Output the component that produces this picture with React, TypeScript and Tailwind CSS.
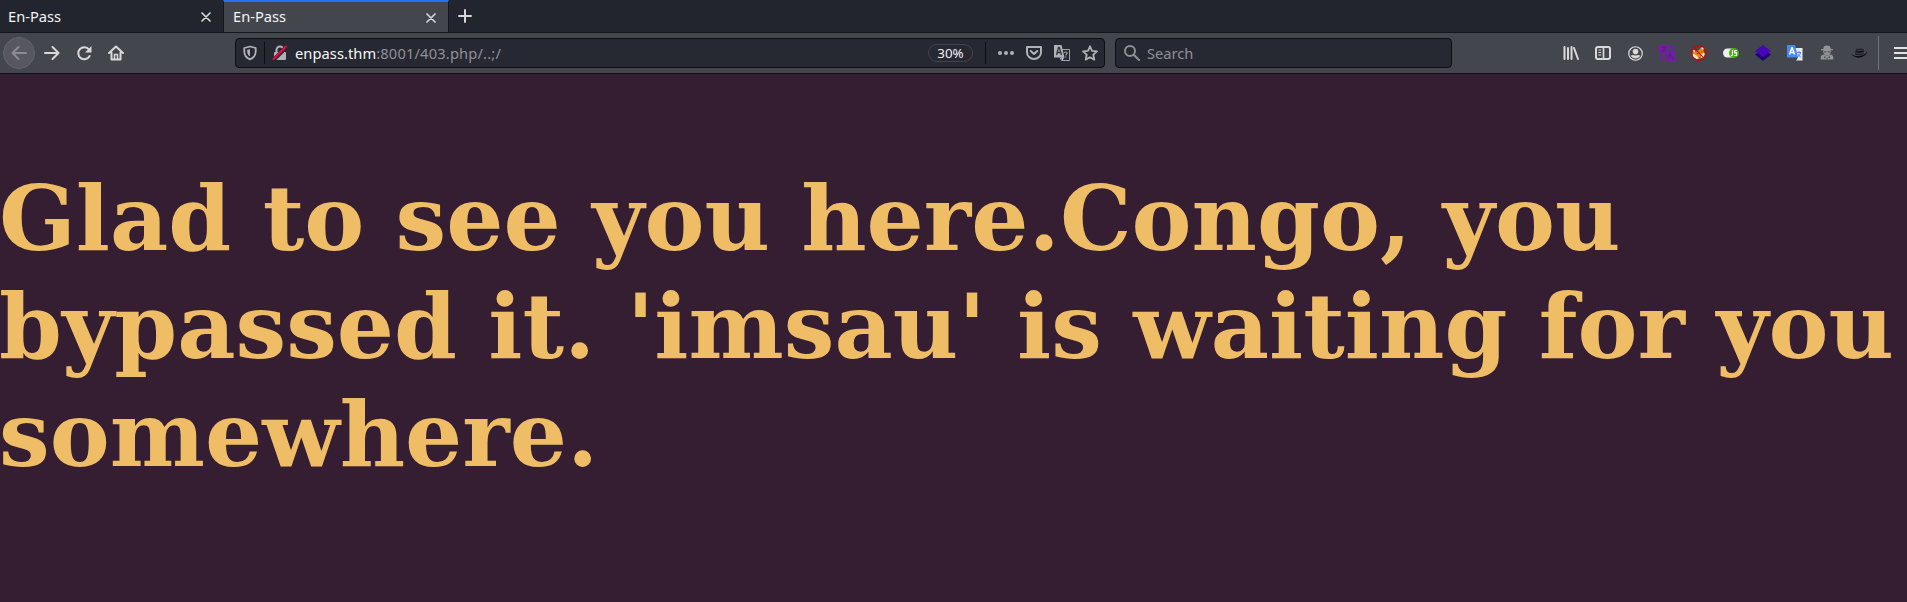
import React from "react";

const CloseIcon = () => (
  <svg width="10" height="10" viewBox="0 0 10 10" fill="none" stroke="#d6d6d6" strokeWidth="1.7" strokeLinecap="round">
    <path d="M1 1 9 9M9 1 1 9" />
  </svg>
);

const Cell = ({ children }: { children: React.ReactNode }) => (
  <div className="flex h-8 w-8 shrink-0 items-center justify-center">{children}</div>
);

const line = {
  width: 16,
  height: 16,
  viewBox: "0 0 16 16",
  fill: "none",
  stroke: "#d9d9d8",
  strokeWidth: 2,
  strokeLinecap: "round" as const,
  strokeLinejoin: "round" as const,
};

const Tabs = () => (
  <div className="flex h-8 bg-[#23252e] text-[14.67px] leading-8 text-[#f4f4f4]">
    <div className="flex w-[223px] items-center justify-between pr-[12px] pl-2">
      <span>En-Pass</span>
      <span className="pt-0.5"><CloseIcon /></span>
    </div>
    <div className="flex h-[33px] w-[226px] items-center justify-between border-x border-t-2 border-x-[#15161c] border-t-[#2571f5] bg-[#43464d] pr-[12px] pl-[9px]">
      <span className="-mt-[3px]">En-Pass</span>
      <CloseIcon />
    </div>
    <div className="flex w-8 items-center justify-center">
      <svg width="14" height="14" viewBox="0 0 14 14" stroke="#d6d6d8" strokeWidth="2" strokeLinecap="round">
        <path d="M7 1v12M1 7h12" />
      </svg>
    </div>
  </div>
);

const UrlBar = () => (
  <div className="flex h-[30px] w-[870px] shrink-0 items-center rounded border border-[#0e0f13] bg-[#262832]">
    <div className="flex w-[28px] justify-center">
      <svg width="14" height="16" viewBox="0 0 14 16" fill="none" stroke="#b1b2b6">
        <path strokeWidth="1.8" strokeLinejoin="round" d="M7 1.5 12.7 3v3.5c0 3.6-2 6.3-5.7 7.8C3.300 12.800 1.300 10.100 1.300 6.500V3Z" />
        <path d="M7 4.200v7.300C5 10.300 4.200 8.700 4.200 6.500V4.800Z" fill="#b1b2b6" stroke="none" />
      </svg>
    </div>
    <div className="h-[22px] w-px bg-[#0e0f13]" />
    <svg className="ml-[7px]" width="16" height="16" viewBox="0 0 16 16" fill="none">
      <path d="M4.500 7V5a3.500 3.500 0 0 1 7 0v2" stroke="#b1b2b6" strokeWidth="2" />
      <rect x="2" y="7" width="12" height="8" rx="1" fill="#b1b2b6" />
      <path d="M1.500 15 14.500 2" stroke="#262832" strokeWidth="4" />
      <path d="M1.500 14 14 1.500" stroke="#f5083f" strokeWidth="2" strokeLinecap="round" />
    </svg>
    <span className="ml-[7px] text-[14.67px] tracking-[0.17px] whitespace-pre text-[#909197]">
      <span className="tracking-[0.06px] text-[#f7f7f8]">enpass.thm</span>:8001/403.php/..;/
    </span>
    <div className="ml-auto flex h-[18px] w-[45px] items-center justify-center rounded-full border border-[#41434c] pt-px text-[13.33px] text-[#f0f0f2]">30%</div>
    <div className="ml-[12px] h-[22px] w-px bg-[#0e0f13]" />
    <div className="ml-[12px] flex items-center gap-3 pr-[6px]">
      <svg width="16" height="16" viewBox="0 0 16 16" fill="#b1b2b6">
        <circle cx="2" cy="8" r="2" /><circle cx="8" cy="8" r="2" /><circle cx="14" cy="8" r="2" />
      </svg>
      <svg width="16" height="16" viewBox="0 0 16 16" fill="none" stroke="#b1b2b6" strokeWidth="2" strokeLinecap="round" strokeLinejoin="round">
        <path d="M1 2h14v5.500a7 6.500 0 0 1-14 0Z" /><path d="M4.700 6 8 9l3.300-3" />
      </svg>
      <svg width="16" height="16" viewBox="0 0 16 16" fill="none">
        <path d="M8 4.500h7.500v11H7.500L6 12.500" stroke="#a4a5a9" />
        <path d="M0 0h7.500l3 12.500H0Z" fill="#b1b2b6" />
        <path d="m2.500 10 2-7.500h.8L7.500 10M3.200 7.500h3.500" stroke="#34363f" strokeWidth="1.300" />
        <path d="M10.500 8c.3-1.500 2.800-1.200 2.500.3-.2.900-1.200 1-1.200 2.200m0 1v1" stroke="#a4a5a9" strokeWidth="1.200" />
        <path d="m7 12.500 3.500 0-2.500 3Z" fill="#d0d0d2" />
      </svg>
      <svg width="16" height="16" viewBox="0 0 16 16" fill="none" stroke="#b1b2b6" strokeWidth="1.800" strokeLinejoin="round">
        <path d="m8 1.300 2 4.500 5 .5-3.700 3.400 1 4.900L8 12.200l-4.300 2.400 1-4.900L1 6.300l5-.5Z" />
      </svg>
    </div>
  </div>
);

const Extensions = () => (
  <div className="ml-[103px] flex items-center">
    <Cell>
      <svg width="16" height="16" viewBox="0 0 16 16" stroke="#d9d9d8" strokeWidth="2" strokeLinecap="round">
        <path d="M1.500 2v12M5 3v11M8.500 2v12M11 3l4 11" />
      </svg>
    </Cell>
    <Cell>
      <svg {...line}>
        <rect x="1" y="2" width="14" height="12" rx="2" />
        <path d="M8.500 2v12" strokeWidth="1.700" /><path d="M3.800 5h2M3.800 7.500h2M3.800 10h2" strokeWidth="1" />
      </svg>
    </Cell>
    <Cell>
      <svg width="15" height="15" viewBox="0 0 16 16" fill="none">
        <circle cx="8" cy="8" r="7.200" stroke="#d9d9d8" strokeWidth="1.300" />
        <circle cx="8" cy="5.900" r="3" fill="#d9d9d8" />
        <path d="M3 10.500c1.300-1.500 2.700-.5 5-.5s3.700-1 5 .5C12 12.500 10 13.200 8 13.200s-4-.7-5-2.700Z" fill="#d9d9d8" />
      </svg>
    </Cell>
    <Cell>
      <svg width="16" height="16" viewBox="0 0 16 16" fill="none">
        <path d="M0 0h9.500v9H0ZM6.500 7H16v9H6.500Z" fill="#7a17ac" />
        <path d="M2 2.500h5.500M4.700 1.200v1.300M6.500 2.500C6 5 4 6.500 2 7.300M3.500 4l4 3.300" stroke="#46345e" strokeWidth="1.100" />
        <path d="m8.700 14.500 2.500-6 2.500 6M9.700 12.500h3.200" stroke="#46345e" strokeWidth="1.200" />
        <path d="M11.500 1.300h2.800v3.500M12.800 3.700l1.500 1.600L15.800 3.700M4.500 14.700H1.700v-3.500M.2 12.300l1.500-1.600 1.500 1.600" stroke="#7a17ac" strokeWidth="1.200" />
      </svg>
    </Cell>
    <Cell>
      <svg width="16" height="16" viewBox="0 0 16 16" fill="none">
        <path d="M1.500 5 4.500 6.500 8 5l2-2.500 3-.5-.5 4 1.500 3-2 3.500-4.500 1.500-4-1.500L2 9.500Z" fill="#e8850f" />
        <path d="M1.500 8.500 5 10l3 3.500-3 .5-3-2.500ZM10 9l3.500-1-.5 4-3 1Z" fill="#f4ebe0" />
        <path d="m2 4.500 2.500 1.300L3 7.500ZM10 3l2.500-.8-.5 2.500Z" fill="#f4ebe0" />
        <path d="m5.500 8 1.500.5-.7.800ZM10 7l1.300-.5v1.200ZM8 12.500l1.500-.3-.5 1.300Z" fill="#33251c" />
        <circle cx="8" cy="8" r="7.400" stroke="#c4090d" strokeWidth="1.200" />
        <path d="m2.800 2.800 10.400 10.400" stroke="#c4090d" strokeWidth="1.200" />
      </svg>
    </Cell>
    <Cell>
      <svg width="16" height="16" viewBox="0 0 16 16" fill="none">
        <rect x="0" y="3.500" width="14" height="9" rx="4.500" fill="#f0efef" />
        <circle cx="11" cy="8" r="5" fill="#3fb30b" />
        <path d="M9.500 5v4.500q0 1.300-1.700 1.100M14 5.600h-2.300v2.200h1.900v2.700h-2.400" stroke="#fff" strokeWidth="1.200" />
      </svg>
    </Cell>
    <Cell>
      <svg width="16" height="16" viewBox="0 0 16 16">
        <path d="M0 9.500 8 5l8 4.500L8 16Z" fill="#1c0473" /><path d="m8 0 8 6-8 6.300L0 6Z" fill="#4906b8" />
      </svg>
    </Cell>
    <Cell>
      <svg width="16" height="16" viewBox="0 0 16 16" fill="none">
        <path d="M8 3h7.500v12.500H9Z" fill="#e8eaed" />
        <path d="M9.500 7.500H14M12 6v1.500m1.500 0c0 2-2 4-3.500 4.500m.7-3 3.300 3.500" stroke="#4a86e8" />
        <path d="M0 0h8l3 12.500H0Z" fill="#4688f4" />
        <path d="m2.500 9.500 2.300-6.500h.5l2.300 6.500M3.500 7.500h3.300" stroke="#fff" strokeWidth="1.400" />
        <path d="M7.500 12.500H11L9 15.500Z" fill="#27385f" />
      </svg>
    </Cell>
    <Cell>
      <svg width="14" height="16" viewBox="0 0 14 16" fill="#939394">
        <path d="M4 1.200q3-1.200 6 0l.7 2.800H13v1.200H1V4h2.300Z" />
        <path d="M3.300 5h7.400v2.500Q10 10 7 10.500 4 10 3.300 7.500ZM.7 14.500V12q.3-2.300 3-2.500L7 11l3.300-1.500q2.700.2 3 2.500v2.500Z" />
        <path d="M4.300 6.300h2v1.200h-2ZM7.700 6.300h2v1.200h-2ZM4 11.500h1.500V13H4ZM8.500 11.500H10V13H8.500ZM6.500 12.500h1v2h-1Z" fill="#4b4d52" />
      </svg>
    </Cell>
    <Cell>
      <svg width="16" height="16" viewBox="0 0 16 16">
        <path d="M0 8.500q2 2.500 7 2.600 6 0 9-4.600.5 2-3 4.500-4 2.500-8 1.300Q1 11 0 8.500Z" fill="#0d0e10" />
        <path d="M4 9.500 4.700 5Q6 3 8 4q3-1 4.500.2L13 8.500q-3 2.500-9 1Z" fill="#191a1d" />
        <path d="M5.300 5.200Q8 6 12 4.800M4.500 8q4 1.500 8.300-.4" stroke="#505359" strokeWidth=".7" fill="none" />
      </svg>
    </Cell>
    <div className="ml-[3px] h-[34px] w-px bg-[#707277]" />
    <svg className="ml-[15px] shrink-0" width="13" height="14" viewBox="0 0 13 14" stroke="#e2e2e2" strokeWidth="2">
      <path d="M0 2h13M0 7h13M0 12h13" />
    </svg>
  </div>
);

export default function App() {
  return (
    <div className="flex h-[602px] w-[1907px] flex-col overflow-hidden bg-[#351e32] font-['Noto_Sans',sans-serif]">
      <Tabs />
      <div className="flex h-[42px] shrink-0 items-center border-y border-t-[#15161c] border-b-[#101116] bg-[#43464d] pl-[3px]">
        <div className="flex h-8 w-8 items-center justify-center rounded-full border border-[#62636a] bg-[#57585f]">
          <svg {...line} stroke="#8b8c90"><path d="M15 8H1.500M7.500 2l-6 6 6 6" /></svg>
        </div>
        <div className="ml-px flex">
          <Cell><svg {...line}><path d="M1 8h13.500M8.500 2l6 6-6 6" /></svg></Cell>
          <Cell><svg {...line}><path d="M13 4.500A6 6 0 1 0 13.600 11" /><path d="M15.500 1v6.500H9Z" fill="#d9d9d8" stroke="none" /></svg></Cell>
          <Cell><svg {...line}><path d="M1 8l7-6.500L15 8M3.500 7.500v7h9v-7" /><path d="M6.500 14V9.500h3V14" strokeWidth="1.500" /></svg></Cell>
        </div>
        <div className="ml-[103px] flex gap-2.5">
          <UrlBar />
          <div className="flex h-[30px] w-[337px] items-center rounded border border-[#0e0f13] bg-[#262832] pl-2 text-[14.67px] text-[#909197]">
            <svg width="16" height="16" viewBox="0 0 16 16" fill="none" stroke="#909197" strokeWidth="2" strokeLinecap="round">
              <circle cx="6" cy="6" r="5" /><path d="m10 10 5 5" />
            </svg>
            <span className="ml-[7px]">Search</span>
          </div>
        </div>
        <Extensions />
      </div>
      <main className="-ml-px pt-[90px] font-['DejaVu_Serif',serif] text-[90px] leading-[108px] font-bold text-[#f0bd67]">
        <h1>Glad to see you here.Congo, you<br />bypassed it. 'imsau' is waiting for you<br />somewhere.</h1>
      </main>
    </div>
  );
}
